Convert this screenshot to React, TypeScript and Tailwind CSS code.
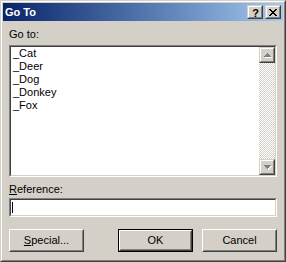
import React from "react";

type P = { className?: string; children?: React.ReactNode };

const Frame3D = ({ className = "", children }: P) => (
  <div
    className={`border border-t-[#d4d0c8] border-l-[#d4d0c8] border-b-[#404040] border-r-[#404040] ${className}`}
  >
    <div className="w-full h-full border border-t-white border-l-white border-b-[#808080] border-r-[#808080] bg-[#d4d0c8] flex items-center justify-center">
      {children}
    </div>
  </div>
);

const PushButton = ({ className = "", children }: P) => (
  <div
    className={`w-[75px] h-[23px] border border-t-white border-l-white border-b-[#404040] border-r-[#404040] ${className}`}
  >
    <div className="w-full h-full border border-t-[#d4d0c8] border-l-[#d4d0c8] border-b-[#808080] border-r-[#808080] bg-[#d4d0c8] flex items-center justify-center leading-[13px]">
      {children}
    </div>
  </div>
);

const Sunken = ({ className = "", children }: P) => (
  <div
    className={`border border-t-[#808080] border-l-[#808080] border-b-white border-r-white ${className}`}
  >
    <div className="w-full h-full border border-t-[#404040] border-l-[#404040] border-b-[#d4d0c8] border-r-[#d4d0c8] bg-white flex">
      {children}
    </div>
  </div>
);

const Tri = ({ up }: { up: boolean }) => {
  const rows = up
    ? [
        [3, 1],
        [2, 3],
        [1, 5],
        [0, 7],
      ]
    : [
        [0, 7],
        [1, 5],
        [2, 3],
        [3, 1],
      ];
  const ox = 3;
  const oy = up ? 4 : 4;
  return (
    <svg width="12" height="12" viewBox="0 0 12 12" shapeRendering="crispEdges">
      {rows.map(([x, w], i) => (
        <rect key={"w" + i} x={ox + x + 1} y={oy + i + 1} width={w} height={1} fill="#ffffff" />
      ))}
      {rows.map(([x, w], i) => (
        <rect key={"g" + i} x={ox + x} y={oy + i} width={w} height={1} fill="#808080" />
      ))}
    </svg>
  );
};

const CloseGlyph = () => {
  const rows: number[][] = [
    [0, 6],
    [1, 5],
    [2, 4],
    [3],
    [2, 4],
    [1, 5],
    [0, 6],
  ];
  return (
    <svg width="8" height="7" viewBox="0 0 8 7" shapeRendering="crispEdges">
      {rows.map((xs, y) =>
        xs.map((x) => <rect key={`${y}-${x}`} x={x} y={y} width={2} height={1} fill="#000" />)
      )}
    </svg>
  );
};

export default function App() {
  const items = ["_Cat", "_Deer", "_Dog", "_Donkey", "_Fox"];
  return (
    <div className="w-[286px] h-[262px] border border-t-[#d4d0c8] border-l-[#d4d0c8] border-b-[#404040] border-r-[#404040] font-['Liberation_Sans',Arial,sans-serif] text-[11px] text-black select-none">
      <div className="w-full h-full border border-t-white border-l-white border-b-[#808080] border-r-[#808080] bg-[#d4d0c8] p-px flex flex-col">
        {/* Title bar */}
        <div className="h-[18px] flex items-center bg-gradient-to-r from-[#0a246a] to-[#a6caf0] pl-[2px] pr-[2px]">
          <span className="font-bold text-white leading-[18px] flex-1">Go To</span>
          <Frame3D className="w-[16px] h-[14px]">
            <span className="font-bold text-[11px] leading-[10px] pl-px pt-px">?</span>
          </Frame3D>
          <Frame3D className="w-[16px] h-[14px] ml-[2px]">
            <div className="pt-px">
              <CloseGlyph />
            </div>
          </Frame3D>
        </div>

        {/* Client */}
        <div className="flex-1 flex flex-col px-[6px]">
          <div className="mt-[7px] leading-[13px]">Go to:</div>
          <Sunken className="mt-[4px] h-[132px]">
            <div className="flex-1 pl-[2px] leading-[13px]">
              {items.map((t) => (
                <div key={t}>{t}</div>
              ))}
            </div>
            <div className="w-[16px] flex flex-col">
              <Frame3D className="w-[16px] h-[16px]">
                <Tri up />
              </Frame3D>
              <svg width="16" height="96" className="block" shapeRendering="crispEdges">
                <defs>
                  <pattern id="chk" width="2" height="2" patternUnits="userSpaceOnUse">
                    <rect width="2" height="2" fill="#d4d0c8" />
                    <rect x="0" y="0" width="1" height="1" fill="#ffffff" />
                    <rect x="1" y="1" width="1" height="1" fill="#ffffff" />
                  </pattern>
                </defs>
                <rect width="16" height="96" fill="url(#chk)" />
              </svg>
              <Frame3D className="w-[16px] h-[16px]">
                <Tri up={false} />
              </Frame3D>
            </div>
          </Sunken>

          <div className="mt-[6px] leading-[13px]">
            <span className="underline underline-offset-[1px]">R</span>eference:
          </div>
          <Sunken className="mt-[2px] h-[19px]">
            <div className="flex items-center pl-px">
              <div className="w-px h-[11px] bg-black" />
            </div>
          </Sunken>

          <div className="mt-[12px] flex items-start">
            <PushButton>
              <span>
                <span className="underline underline-offset-[1px]">S</span>pecial...
              </span>
            </PushButton>
            <div className="flex-1" />
            <div className="w-[75px] h-[23px] border border-black">
              <div className="w-full h-full border border-t-white border-l-white border-b-[#404040] border-r-[#404040]">
                <div className="w-full h-full border border-t-[#d4d0c8] border-l-[#d4d0c8] border-b-[#808080] border-r-[#808080] bg-[#d4d0c8] flex items-center justify-center leading-[13px]">
                  OK
                </div>
              </div>
            </div>
            <PushButton className="ml-[9px]">Cancel</PushButton>
          </div>
        </div>
      </div>
    </div>
  );
}
